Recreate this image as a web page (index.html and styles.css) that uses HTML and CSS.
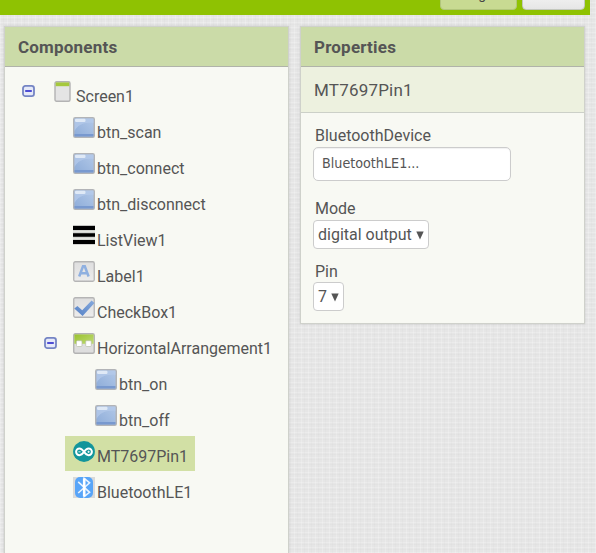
FILE: index.html
```html
<!DOCTYPE html>
<html lang="en">
<head>
<meta charset="utf-8">
<title>Designer</title>
<link rel="stylesheet" href="styles.css">
</head>
<body>
<svg class="defs" width="0" height="0" aria-hidden="true">
  <defs>
    <linearGradient id="blue" x1="0" y1="1" x2="1" y2="0"><stop offset="0" stop-color="#8cabd8"/><stop offset="1" stop-color="#b3c9e8"/></linearGradient>
    <linearGradient id="grey" x1="0" y1="0" x2="0" y2="1"><stop offset="0" stop-color="#dedede"/><stop offset="1" stop-color="#ececec"/></linearGradient>
    <linearGradient id="green" x1="0" y1="0" x2="1" y2="1"><stop offset="0" stop-color="#9ac22e"/><stop offset="1" stop-color="#bfdb76"/></linearGradient>
    <linearGradient id="tick" x1="0" y1="1" x2="1" y2="0"><stop offset="0" stop-color="#5582c6"/><stop offset="1" stop-color="#86a9dc"/></linearGradient>
    <symbol id="button" viewBox="0 0 22 21">
      <rect x=".75" y=".75" width="20.5" height="19.5" rx="1.5" fill="url(#blue)" stroke="#b2b4b7" stroke-width="1.5"/>
      <path d="M1.5 14V1.5h19V6C10 5 5 8 1.5 14z" fill="#b4cae9" opacity=".75"/>
      <rect x="2" y="1.7" width="10.5" height="3.2" rx="1.2" fill="#dfe9f6"/>
      <path d="M1.5 17h19v2.5h-19z" fill="#7899cf"/>
    </symbol>
    <symbol id="minus" viewBox="0 0 13 12">
      <rect x="1" y=".9" width="11" height="10.2" rx="2.4" fill="#e6eaf8" stroke="#7585c4" stroke-width="1.8"/>
      <path d="M3.2 6h6.6" stroke="#3b3bd0" stroke-width="1.8"/>
    </symbol>
  </defs>
</svg>
<header class="topbar">
  <span class="tab tab-on">Designer</span>
  <span class="tab"></span>
</header>
<main class="columns">
  <section class="panel components">
    <h2>Components</h2>
    <ul class="tree">
      <li class="screen"><svg class="toggle" width="13" height="12"><use href="#minus"/></svg><svg class="icon" width="17" height="21" viewBox="0 0 17 21"><rect x="1" y=".75" width="15" height="19.5" rx="1.5" fill="#e4e4e4" stroke="#b3b3b3" stroke-width="1.4"/><path d="M1.7 1.4h13.6v3.8H1.7z" fill="#a5c83d"/></svg><span>Screen1</span></li>
      <li class="l1"><svg class="icon" width="22" height="21"><use href="#button"/></svg><span>btn_scan</span></li>
      <li class="l1"><svg class="icon" width="22" height="21"><use href="#button"/></svg><span>btn_connect</span></li>
      <li class="l1"><svg class="icon" width="22" height="21"><use href="#button"/></svg><span>btn_disconnect</span></li>
      <li class="l1"><svg class="icon" width="22" height="21" viewBox="0 0 22 21"><path d="M0 0h22v19.7H0z" fill="#c4c5c2"/><path d="M0 5.5h22v2H0zM0 12.5h22v2H0z" fill="#e4e5e0"/><path d="M0 1h22v4H0zM0 8.2h22v3.6H0zM0 15h22v4H0z"/></svg><span>ListView1</span></li>
      <li class="l1"><svg class="icon" width="22" height="21" viewBox="0 0 22 21"><rect x=".75" y=".75" width="20.5" height="19.5" rx="1.5" fill="url(#grey)" stroke="#b5b5b5" stroke-width="1.3"/><path d="M6.2 15.5 10 5.2h1.8l3.8 10.3M7.8 12.2h6.2" fill="none" stroke="#8fb0e0" stroke-width="2.5"/></svg><span>Label1</span></li>
      <li class="l1"><svg class="icon" width="22" height="21" viewBox="0 0 22 21"><rect x=".75" y=".75" width="20.5" height="19.5" rx="1.5" fill="url(#grey)" stroke="#b5b5b5" stroke-width="1.3"/><path d="M1.3 11.4 4.4 9l4.8 4.2 9.4-9.7 2.9 2.6L9.6 19z" fill="url(#tick)"/></svg><span>CheckBox1</span></li>
      <li class="l1 parent"><svg class="toggle" width="13" height="12"><use href="#minus"/></svg><svg class="icon" width="22" height="21" viewBox="0 0 22 21"><rect x=".75" y=".75" width="20.5" height="19.5" rx="1.5" fill="#dedede" stroke="#b3b3b3" stroke-width="1.4"/><path d="M1.4 1.4h19.2v9.4H1.4z" fill="url(#green)"/><rect x="3.4" y="7.7" width="5.6" height="5.8" rx="1" fill="#fff" stroke="#b8bfa9" stroke-width=".7"/><rect x="12.7" y="7.7" width="5.6" height="5.8" rx="1" fill="#fff" stroke="#b8bfa9" stroke-width=".7"/></svg><span>HorizontalArrangement1</span></li>
      <li class="l2"><svg class="icon" width="22" height="21"><use href="#button"/></svg><span>btn_on</span></li>
      <li class="l2"><svg class="icon" width="22" height="21"><use href="#button"/></svg><span>btn_off</span></li>
      <li class="l1 selected"><svg class="icon" width="22" height="21" viewBox="0 0 22 21"><ellipse cx="11" cy="10.5" rx="10.9" ry="10.4" fill="#12959b"/><path d="M11 10.8C9.5 8.6 8.4 7.4 6.5 7.4a3.4 3.4 0 0 0 0 6.8c1.9 0 3-1.2 4.5-3.4s2.6-3.4 4.5-3.4a3.4 3.4 0 0 1 0 6.8c-1.9 0-3-1.2-4.5-3.4z" fill="none" stroke="#fff" stroke-width="2"/><path d="M5.4 10.8h2.2M14.4 10.8h2.4M15.6 9.6V12" stroke="#fff" stroke-width=".8"/></svg><span>MT7697Pin1</span></li>
      <li class="l1"><svg class="icon" width="22" height="21" viewBox="0 0 22 21"><path d="M0 0h22v21H0z" fill="#d9dada"/><rect x="2" width="18" height="21" rx="5" fill="#58a5f8"/><path d="m5.2 4.8 11.4 10.5-5.4 4.2V1.4l5.4 4.4L5.2 16" fill="none" stroke="#e8f3ff" stroke-width="1.6"/><path d="M11.2 1.4v18" stroke="#fff" stroke-width="2.6"/></svg><span>BluetoothLE1</span></li>
    </ul>
  </section>
  <section class="panel properties">
    <h2>Properties</h2>
    <p class="target">MT7697Pin1</p>
    <div class="fields">
      <label>BluetoothDevice</label>
      <div class="textbox">BluetoothLE1...</div>
      <label>Mode</label>
      <button class="drop">digital output <svg width="8" height="9" viewBox="0 0 8 9"><path d="M.3.5h7.4L4 8.5z" fill="#555"/></svg></button>
      <label class="pin">Pin</label>
      <button class="drop">7 <svg width="8" height="9" viewBox="0 0 8 9"><path d="M.3.5h7.4L4 8.5z" fill="#555"/></svg></button>
    </div>
  </section>
</main>
</body>
</html>
```
FILE: styles.css
```css
* { box-sizing: border-box; }
body {
  margin: 0;
  height: 553px;
  overflow: hidden;
  color: #555;
  font: 16px/20px Roboto, "Liberation Sans", sans-serif;
  background-color: #e6e6e6;
  background-image:
    repeating-linear-gradient(90deg, rgba(255,255,255,.2) 0 1px, transparent 1px 3px, rgba(170,170,170,.05) 3px 4px, transparent 4px 7px),
    repeating-linear-gradient(0deg, rgba(255,255,255,.2) 0 1px, transparent 1px 3px, rgba(170,170,170,.05) 3px 4px, transparent 4px 5px);
}
.defs { position: absolute; }
.topbar {
  display: flex;
  align-items: flex-end;
  justify-content: flex-end;
  gap: 5px;
  width: 590px;
  height: 15px;
  padding: 0 5px 5px 0;
  overflow: hidden;
  background: #8fc202;
}
.tab {
  flex: none;
  width: 63px;
  height: 30px;
  padding-top: 3px;
  border: 1px solid #c3c7bd;
  border-radius: 4px;
  background: linear-gradient(#fff, #e6e6e6);
  font-size: 14px;
  text-align: center;
}
.tab-on { width: 77px; background: #c8da92; border-color: #b2c67c; color: #444; }
.columns { display: flex; align-items: flex-start; gap: 11px; padding: 11px 0 0 4px; }
.panel {
  border: 1px solid #cfd1cb;
  background: #f8f9f3;
  box-shadow: 0 0 2px rgba(0,0,0,.12);
}
.components { width: 285px; height: 540px; }
.properties { width: 285px; height: 298px; }
h2 {
  margin: 0;
  height: 40px;
  padding-left: 13px;
  border-bottom: 1px solid #b0b3a9;
  background: #cbdba8;
  font-size: 17px;
  line-height: 40px;
  font-weight: 700;
  letter-spacing: .2px;
}
.tree { margin: 0; padding: 9px 0 0 60px; list-style: none; }
.tree li {
  display: flex;
  width: max-content;
  height: 35px;
  margin-bottom: 1px;
  padding: 5px 7px 0 8px;
  white-space: nowrap;
}
.tree .icon { flex: none; margin-right: 2px; }
.tree span { padding-top: 6px; }
.tree .toggle { flex: none; margin-top: 4px; }
.tree .screen { margin-left: -60px; padding-left: 17px; }
.screen .icon { margin: 0 5px 0 19px; }
.tree .parent { margin-left: -29px; }
.parent .icon { margin-left: 16px; }
.tree .l2 { margin-left: 22px; }
.tree .selected { background: #d2e0a5; }
.target {
  margin: 0;
  height: 46px;
  padding-left: 13px;
  border-bottom: 1px solid #ccd0c8;
  background: #edf1df;
  font-size: 17px;
  line-height: 46px;
  letter-spacing: .2px;
}
.fields { display: flex; flex-direction: column; align-items: flex-start; padding: 12px; }
.fields label { height: 22px; padding-left: 2px; line-height: 21px; }
.textbox {
  width: 198px;
  height: 34px;
  margin-bottom: 17px;
  padding-left: 8px;
  border: 1px solid #ccc;
  border-radius: 5px;
  background: #fff;
  box-shadow: inset 0 1px 1px rgba(0,0,0,.06);
  font: 14.2px/31px "DejaVu Sans Condensed", "DejaVu Sans", sans-serif;
  font-stretch: condensed;
}
.drop {
  display: flex;
  align-items: center;
  gap: 4px;
  height: 29px;
  padding: 0 4px;
  border: 1px solid #ccc;
  border-radius: 4px;
  background: #fff;
  color: #555;
  font: 16px/20px Roboto, sans-serif;
}
.drop svg { margin-top: 2px; }
.fields .pin { margin-top: 11px; line-height: 23px; }
```
